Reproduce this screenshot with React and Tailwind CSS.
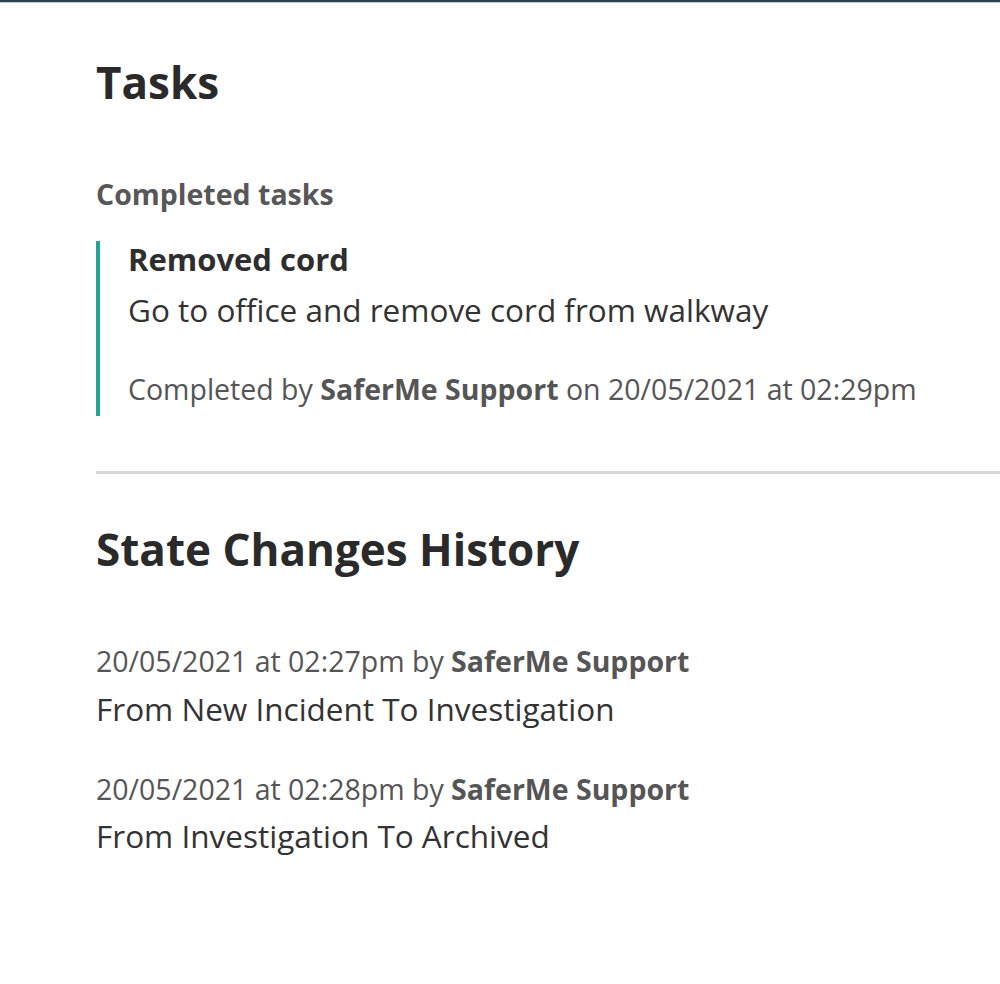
import React from "react";

const history = [
	{ when: "20/05/2021 at 02:27pm", by: "SaferMe Support", change: "From New Incident To Investigation" },
	{ when: "20/05/2021 at 02:28pm", by: "SaferMe Support", change: "From Investigation To Archived" },
];

const App = () => {
	return (
		<div className="min-h-screen bg-white font-['Open_Sans',sans-serif] text-[#2e2e2e]">
			{/* Top edge */}
			<div className="h-[2px] bg-[#2c434d]" />
			<div className="h-px bg-[#b9cbd0]" />

			<div className="pl-[96px] pt-[53px]">
				{/* Tasks */}
				<h1 className="text-[44px] leading-[52px] font-bold text-[#2a2a2a]">Tasks</h1>
				<h3 className="mt-[68px] text-[28.5px] leading-[36px] font-bold text-[#575757]">Completed tasks</h3>

				<div className="mt-[29px] border-l-[4px] border-[#21a597] pl-[28px] pb-[9px]">
					<div className="text-[31px] leading-[36px] font-bold text-[#2e2e2e]">Removed cord</div>
					<div className="mt-[13px] text-[31.5px] leading-[40px] text-[#333]">
						Go to office and remove cord from walkway
					</div>
					<div className="mt-[41px] text-[28.5px] leading-[36px] text-[#555]">
						Completed by <span className="font-bold">SaferMe Support</span> on 20/05/2021 at 02:29pm
					</div>
				</div>

				<div className="mt-[55px] h-[3px] bg-[#d6d6d6]" />

				{/* State changes */}
				<h2 className="mt-[49px] text-[44px] leading-[52px] font-bold text-[#2a2a2a]">State Changes History</h2>

				<div className="mt-[68px]">
					{history.map((h, i) => (
						<div key={i} className={i > 0 ? "mt-[42px]" : ""}>
							<div className="text-[28.5px] leading-[36px] text-[#555]">
								{h.when} by <span className="font-bold">{h.by}</span>
							</div>
							<div className={`${i > 0 ? "mt-[9px]" : "mt-[10px]"} text-[31.5px] leading-[40px] text-[#333]`}>
								{h.change}
							</div>
						</div>
					))}
				</div>
			</div>
		</div>
	);
};

export default App;
